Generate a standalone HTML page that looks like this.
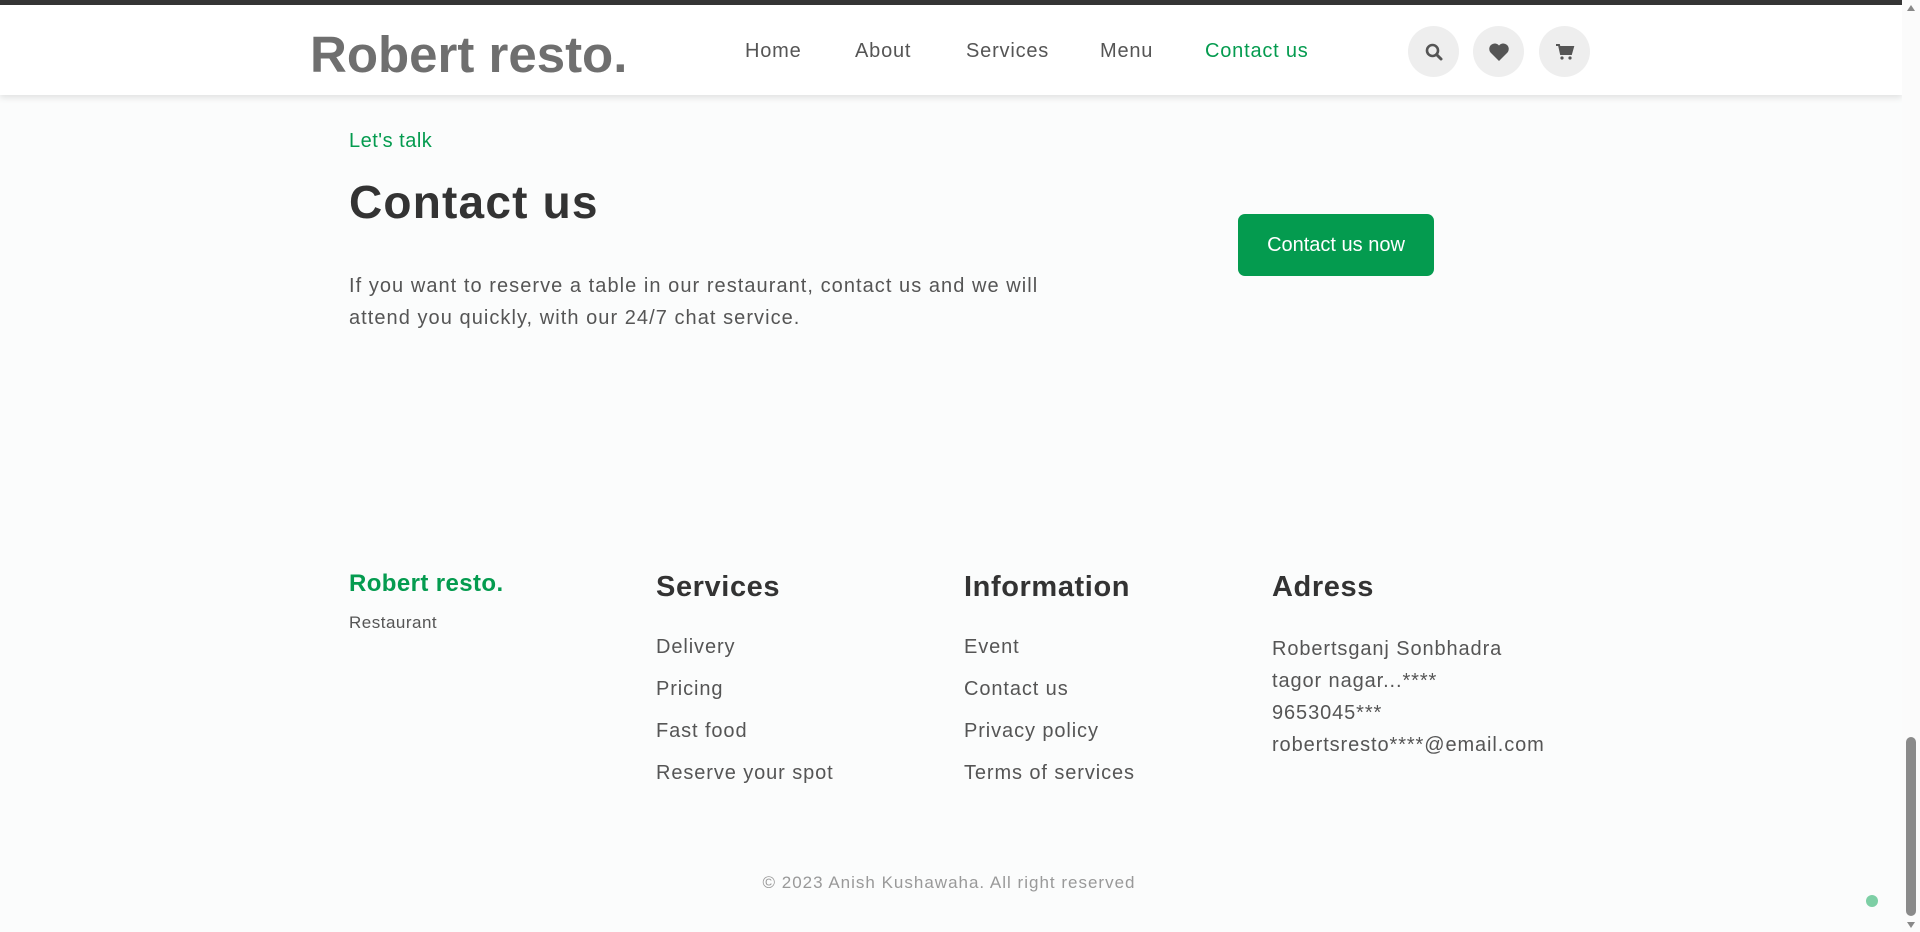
<!DOCTYPE html>
<html><head><meta charset="utf-8"><style>
*{margin:0;padding:0;box-sizing:border-box}
body{width:1920px;height:932px;overflow:hidden;background:#fbfcfc;font-family:"Liberation Sans",sans-serif;position:relative;color:#555}
.abs{position:absolute;white-space:nowrap}
.top{position:absolute;left:0;top:0;width:1920px;height:5px;background:#353535}
.header{position:absolute;left:0;top:5px;width:1902px;height:90px;background:#fff;box-shadow:0 3px 6px rgba(0,0,0,.1)}
.logo{left:310px;top:20px;font-size:51px;font-weight:bold;color:#6f6f6f}
.nav{top:35px;font-size:20px;color:#555;letter-spacing:.8px}
.ic{position:absolute;top:21px;width:51px;height:51px;border-radius:50%;background:#eee;display:flex;align-items:center;justify-content:center}
.green{color:#049b4f}
.fh{font-size:29px;font-weight:bold;color:#333;top:571px;letter-spacing:.6px}
.fi{font-size:20px;color:#555;letter-spacing:.9px}
.sb{position:absolute;right:0;top:0;width:18px;height:932px;background:#fbfbfb}
</style></head><body>
<div class="top"></div>
<div class="header">
<div class="abs logo">Robert resto.</div>
<div class="abs nav" style="left:745px">Home</div>
<div class="abs nav" style="left:855px">About</div>
<div class="abs nav" style="left:966px">Services</div>
<div class="abs nav" style="left:1100px">Menu</div>
<div class="abs nav green" style="left:1205px">Contact us</div>
<div class="ic" style="left:1408px"><svg width="20" height="20" viewBox="0 0 20 20"><circle cx="8.5" cy="8.5" r="5.5" fill="none" stroke="#555" stroke-width="2.6"/><path d="M12.5 12.5L17 17" stroke="#555" stroke-width="3" stroke-linecap="round"/></svg></div>
<div class="ic" style="left:1473px"><svg width="22" height="20" viewBox="0 0 22 20"><path d="M11 19L2.5 10.5A5 5 0 0 1 11 3.5 5 5 0 0 1 19.5 10.5Z" fill="#555"/></svg></div>
<div class="ic" style="left:1539px"><svg width="20" height="20" viewBox="0 0 20 20"><path d="M1 3h3l2 9h10l2-7H5" fill="none" stroke="#555" stroke-width="2"/><path d="M5 5h13l-2 7H6z" fill="#555"/><circle cx="7" cy="16" r="1.6" fill="#555"/><circle cx="15" cy="16" r="1.6" fill="#555"/></svg></div>
</div>

<div class="abs green" style="left:349px;top:130px;font-size:20px;letter-spacing:.5px">Let's talk</div>
<div class="abs" style="left:349px;top:175px;font-size:46px;font-weight:bold;color:#333;letter-spacing:1.2px">Contact us</div>
<div class="abs" style="left:349px;top:270px;font-size:20px;line-height:32px;color:#555;letter-spacing:1.05px">If you want to reserve a table in our restaurant, contact us and we will<br>attend you quickly, with our 24/7 chat service.</div>
<div class="abs" style="left:1238px;top:214px;width:196px;height:62px;background:#049b4f;border-radius:7px;color:#fff;font-size:20px;display:flex;align-items:center;justify-content:center">Contact us now</div>

<div class="abs green" style="left:349px;top:570px;font-size:24px;font-weight:bold;letter-spacing:.4px">Robert resto.</div>
<div class="abs" style="left:349px;top:613px;font-size:17px;color:#555;letter-spacing:.5px">Restaurant</div>

<div class="abs fh" style="left:656px">Services</div>
<div class="abs fi" style="left:656px;top:636px">Delivery</div>
<div class="abs fi" style="left:656px;top:678px">Pricing</div>
<div class="abs fi" style="left:656px;top:720px">Fast food</div>
<div class="abs fi" style="left:656px;top:762px">Reserve your spot</div>

<div class="abs fh" style="left:964px">Information</div>
<div class="abs fi" style="left:964px;top:636px">Event</div>
<div class="abs fi" style="left:964px;top:678px">Contact us</div>
<div class="abs fi" style="left:964px;top:720px">Privacy policy</div>
<div class="abs fi" style="left:964px;top:762px">Terms of services</div>

<div class="abs fh" style="left:1272px">Adress</div>
<div class="abs fi" style="left:1272px;top:633px;line-height:32px">Robertsganj Sonbhadra<br>tagor nagar...****<br>9653045***<br>robertsresto****@email.com</div>

<div class="abs" style="left:0;width:1898px;text-align:center;top:873px;font-size:17px;color:#999;letter-spacing:1px">© 2023 Anish Kushawaha. All right reserved</div>

<div class="abs" style="left:1866px;top:895px;width:12px;height:12px;border-radius:50%;background:#7dcfa5"></div>
<div class="sb">
<div style="position:absolute;left:5px;top:5px;width:0;height:0;border-left:4px solid transparent;border-right:4px solid transparent;border-bottom:6px solid #888"></div>
<div style="position:absolute;left:4px;top:737px;width:10px;height:179px;border-radius:5px;background:#8a8a8a"></div>
<div style="position:absolute;left:5px;top:922px;width:0;height:0;border-left:4px solid transparent;border-right:4px solid transparent;border-top:6px solid #888"></div>
</div>
</body></html>
